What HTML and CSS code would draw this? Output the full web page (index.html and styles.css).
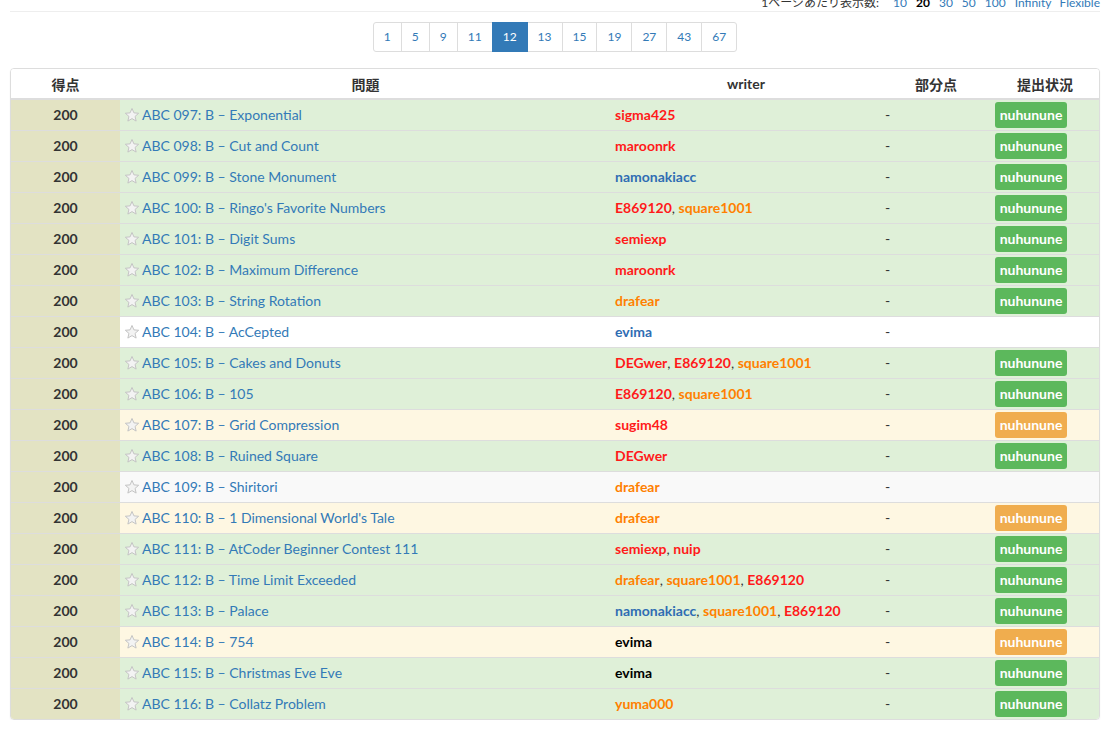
FILE: index.html
```html
<!DOCTYPE html>
<html lang="ja">
<head>
<meta charset="utf-8">
<title>Problems</title>
<link rel="stylesheet" href="styles.css">
</head>
<body>
<div class="page">
  <div class="perpage">1ページあたり表示数: <a>10</a><b>20</b><a>30</a><a>50</a><a>100</a><a>Infinity</a><a class="last">Flexible</a></div>
  <div class="pager">
    <ul class="pagination">
      <li><a>1</a></li><li><a>5</a></li><li><a>9</a></li><li><a>11</a></li><li class="active"><a>12</a></li><li><a>13</a></li><li><a>15</a></li><li><a>19</a></li><li><a>27</a></li><li><a>43</a></li><li><a>67</a></li>
    </ul>
  </div>
  <div class="panel">
    <table class="tbl">
      <colgroup><col class="c1"><col class="c2"><col class="c3"><col class="c4"><col class="c5"></colgroup>
      <thead>
        <tr><th>得点</th><th>問題</th><th>writer</th><th>部分点</th><th>提出状況</th></tr>
      </thead>
      <tbody id="rows"></tbody>
    </table>
  </div>
</div>
<script src="app.js"></script>
</body>
</html>
```
FILE: app.js
```js
var data = [
 ["097","Exponential",[["sigma425","r"]],"ok"],
 ["098","Cut and Count",[["maroonrk","r"]],"ok"],
 ["099","Stone Monument",[["namonakiacc","b"]],"ok"],
 ["100","Ringo's Favorite Numbers",[["E869120","r"],["square1001","o"]],"ok"],
 ["101","Digit Sums",[["semiexp","r"]],"ok"],
 ["102","Maximum Difference",[["maroonrk","r"]],"ok"],
 ["103","String Rotation",[["drafear","o"]],"ok"],
 ["104","AcCepted",[["evima","b"]],"none"],
 ["105","Cakes and Donuts",[["DEGwer","r"],["E869120","r"],["square1001","o"]],"ok"],
 ["106","105",[["E869120","r"],["square1001","o"]],"ok"],
 ["107","Grid Compression",[["sugim48","r"]],"wa"],
 ["108","Ruined Square",[["DEGwer","r"]],"ok"],
 ["109","Shiritori",[["drafear","o"]],"stripe"],
 ["110","1 Dimensional World's Tale",[["drafear","o"]],"wa"],
 ["111","AtCoder Beginner Contest 111",[["semiexp","r"],["nuip","r"]],"ok"],
 ["112","Time Limit Exceeded",[["drafear","o"],["square1001","o"],["E869120","r"]],"ok"],
 ["113","Palace",[["namonakiacc","b"],["square1001","o"],["E869120","r"]],"ok"],
 ["114","754",[["evima","k"]],"wa"],
 ["115","Christmas Eve Eve",[["evima","k"]],"ok"],
 ["116","Collatz Problem",[["yuma000","o"]],"ok"]
];
var star = '<svg class="star" width="16" height="16" viewBox="0 0 24 24"><path d="M12 2.2l2.9 6.6 7.1.6-5.4 4.7 1.6 7-6.2-3.7-6.2 3.7 1.6-7L2 9.4l7.1-.6z" fill="#f3f3f3" stroke="#c4c4c4" stroke-width="1.5" stroke-linejoin="round"/></svg>';
var html = "";
data.forEach(function (d) {
  var cls = d[3] === "ok" ? "row-ok" : d[3] === "wa" ? "row-wa" : d[3] === "stripe" ? "row-stripe" : "row-none";
  var writers = d[2].map(function (w) { return '<span class="user u-' + w[1] + '">' + w[0] + '</span>'; }).join('<span class="sep">, </span>');
  var badge = "";
  if (d[3] === "ok") badge = '<span class="badge badge-ok">nuhunune</span>';
  if (d[3] === "wa") badge = '<span class="badge badge-wa">nuhunune</span>';
  html += '<tr class="' + cls + '"><td class="score">200</td><td class="prob">' + star + '<a>ABC ' + d[0] + ': B – ' + d[1] + '</a></td><td class="writer">' + writers + '</td><td class="partial">-</td><td class="status">' + badge + '</td></tr>';
});
document.getElementById("rows").innerHTML = html;
```
FILE: styles.css
```css
* { box-sizing: border-box; }
html, body { margin: 0; padding: 0; background: #fff; }
body {
  font-family: Lato, "Noto Sans CJK JP", sans-serif;
  font-size: 14px;
  color: #333;
  overflow: hidden;
}
a { color: #337ab7; text-decoration: none; }
.page { padding: 0 8px 0 10px; }

.perpage {
  margin-top: -6px;
  height: 18px;
  line-height: 17px;
  font-size: 12px;
  text-align: right;
  color: #333;
  border-bottom: 1px solid #eee;
}
.perpage a, .perpage b { margin-left: 9px; }
.perpage a:first-child { margin-left: 11px; }
.perpage a.last { margin-left: 8px; }
.perpage b { color: #000; font-weight: 700; }

.pager { display: flex; justify-content: center; margin-top: 10px; }
.pagination {
  display: flex;
  list-style: none;
  margin: 0;
  padding: 0;
}
.pagination li a {
  display: block;
  padding: 5px 10px;
  font-size: 12px;
  line-height: 18px;
  border: 1px solid #ddd;
  margin-left: -1px;
  background: #fff;
  color: #337ab7;
}
.pagination li:first-child a { margin-left: 0; border-radius: 3px 0 0 3px; }
.pagination li:last-child a { border-radius: 0 3px 3px 0; }
.pagination li.active a { background: #337ab7; border-color: #337ab7; color: #fff; position: relative; }

.panel {
  margin-top: 16px;
  border: 1px solid #ddd;
  border-radius: 4px;
  overflow: hidden;
  box-shadow: 0 1px 2px rgba(0,0,0,0.06);
}
.tbl {
  width: 100%;
  border-collapse: collapse;
  table-layout: fixed;
}
.c1 { width: 109px; }
.c2 { width: 491px; }
.c3 { width: 270px; }
.c4 { width: 110px; }
.c5 { width: 108px; }
.tbl th {
  height: 30px;
  padding: 0 4px;
  font-weight: 700;
  text-align: center;
  border-bottom: 2px solid #ddd;
  background: #fff;
}
.tbl td {
  height: 31px;
  padding: 0 4px;
  border-top: 1px solid #ddd;
  vertical-align: middle;
  white-space: nowrap;
}
.tbl tbody tr:first-child td { border-top: 0; }
.tbl td.score {
  background: #e3e3c3;
  text-align: center;
  font-weight: 700;
}
.row-ok td { background: #dff0d8; }
.row-wa td { background: #fef7e2; }
.row-none td { background: #fff; }
.row-stripe td { background: #f9f9f9; }

.star { vertical-align: -3px; margin-right: 2px; }
.writer .user { font-weight: 700; }
.u-r { color: #ff1a1a; }
.u-o { color: #ff8000; }
.u-b { color: #2f6db3; }
.u-k { color: #000; }
.sep { color: #333; }
.partial { color: #333; }
.badge {
  display: inline-block;
  width: 72px;
  height: 26px;
  line-height: 26px;
  text-align: center;
  font-weight: 700;
  font-size: 14px;
  color: #fff;
  border-radius: 3px;
  vertical-align: middle;
}
.badge-ok { background: #5cb85c; }
.badge-wa { background: #f0ad4e; }
```
